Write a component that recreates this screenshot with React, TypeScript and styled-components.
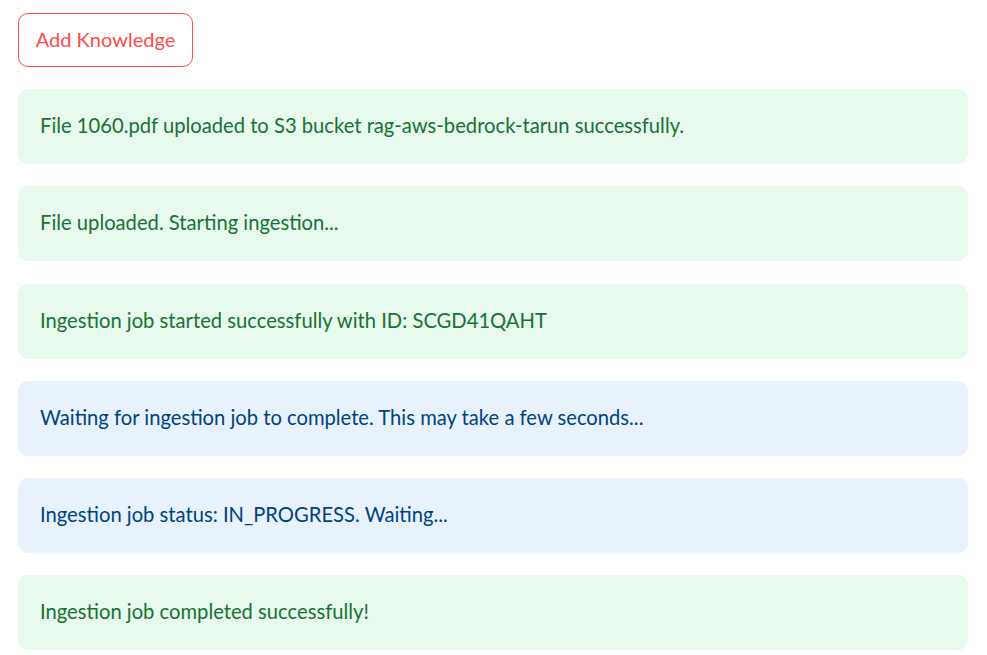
import React from "react";
import styled, { createGlobalStyle } from "styled-components";

const Global = createGlobalStyle`
  html, body { margin: 0; padding: 0; background: #ffffff; }
  body { font-family: "Source Sans Pro", Lato, "Noto Sans", sans-serif; }
`;

const Page = styled.main`
  display: flex;
  flex-direction: column;
  gap: 22.2px;
  padding: 13px 19px 0 18px;
`;

const Button = styled.button`
  align-self: flex-start;
  height: 54px;
  width: 175px;
  border: 1px solid #ff4b4b;
  border-radius: 10px;
  background: #ffffff;
  color: #ff4b4b;
  font-family: inherit;
  font-size: 20px;
  padding: 0 0 2px;
  cursor: pointer;
`;

type Kind = "success" | "info";

const Alert = styled.div<{ $kind: Kind }>`
  display: flex;
  align-items: center;
  height: 75px;
  box-sizing: border-box;
  padding: 0 22px 3px;
  border-radius: 10px;
  font-size: 20.2px;
  background: ${(p) => (p.$kind === "success" ? "#e8f9ee" : "#e8f2fc")};
  color: ${(p) => (p.$kind === "success" ? "#177233" : "#004280")};
`;

const messages: { kind: Kind; text: string }[] = [
  { kind: "success", text: "File 1060.pdf uploaded to S3 bucket rag-aws-bedrock-tarun successfully." },
  { kind: "success", text: "File uploaded. Starting ingestion..." },
  { kind: "success", text: "Ingestion job started successfully with ID: SCGD41QAHT" },
  { kind: "info", text: "Waiting for ingestion job to complete. This may take a few seconds..." },
  { kind: "info", text: "Ingestion job status: IN_PROGRESS. Waiting..." },
  { kind: "success", text: "Ingestion job completed successfully!" },
];

export default function App() {
  return (
    <>
      <Global />
      <Page>
        <Button>Add Knowledge</Button>
        {messages.map((m, i) => (
          <Alert key={i} $kind={m.kind}>
            {m.text}
          </Alert>
        ))}
      </Page>
    </>
  );
}
